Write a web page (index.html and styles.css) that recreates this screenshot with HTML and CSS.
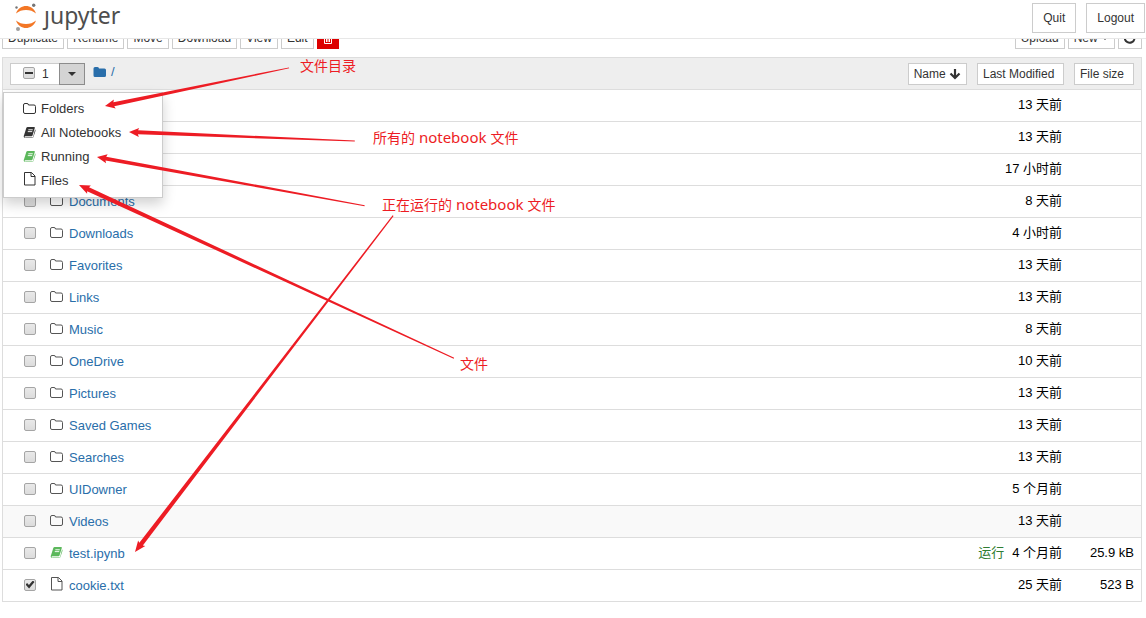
FILE: index.html
```
<!DOCTYPE html>
<html lang="zh-CN">
<head>
<meta charset="utf-8">
<title>Jupyter</title>
<link rel="stylesheet" href="styles.css">
</head>
<body>
<svg class="defs" aria-hidden="true">
  <symbol id="folder-o" viewBox="0 0 14 12"><path d="M.5 9V2Q.5.500 2 .500h2Q5.500.500 5.500 2H11Q12.500 2 12.500 3.500V9Q12.500 10.500 11 10.500H2Q.5 10.500.5 9z" fill="none" stroke="currentColor"/></symbol>
  <symbol id="folder" viewBox="0 0 14 12"><path d="M.5 9.500v-7Q.5 1 2 1h2.500Q6 1 6 2.500h5.500Q13 2.500 13 4v5.500Q13 11 11.500 11H2Q.5 11 .5 9.500z" fill="currentColor"/></symbol>
  <symbol id="book" viewBox="0 0 14 13"><path d="M4.500 0h7q1 0 .7 1L9.800 9q-.3 1-1.200 1H2q-.9 0-.9.8t1 .7h7q1 0 1.300-1l2.100-7.700q.7.500.4 1.400l-2.200 6.700Q10.500 12 9 12H2Q.3 12 .2 10.500q0-.8.4-1.700L3 1q.3-1 1.500-1z" fill="currentColor"/><path d="M5.200 3h4.800M4.600 5h4.800" stroke="#fff"/></symbol>
  <symbol id="file-o" viewBox="0 0 12 14"><path d="M.5.5h7l3.500 3.500v9H.5zM7 .5v4h4" fill="none" stroke="currentColor"/></symbol>
</svg>

<header class="topbar">
  <a class="brand" href="#" aria-label="jupyter">
    <svg class="brand-mark" viewBox="0 0 24 28" aria-hidden="true">
      <path d="M2 10.500C4 5 8 3 12 3s8 2 10 7.500C19 8 16 7 12 7s-7 1-10 3.500z" fill="#f37726"/>
      <path d="M2 17.500C4 23 8 25 12 25s8-2 10-7.500C19 20 16 21 12 21s-7-1-10-3.500z" fill="#f37726"/>
      <circle cx="19.700" cy="2.200" r="1.700" fill="#767677"/><circle cx="2.500" cy="4.500" r="1.200" fill="#767677"/><circle cx="4" cy="26" r="2" fill="#9e9e9e"/>
    </svg>
    <span class="brand-name">ȷupyter</span>
  </a>
  <div class="session">
    <button class="btn btn-lg">Quit</button>
    <button class="btn btn-lg">Logout</button>
  </div>
</header>

<main class="page">
  <div class="toolbar">
    <div class="tools">
      <button class="btn">Duplicate</button>
      <button class="btn">Rename</button>
      <button class="btn">Move</button>
      <button class="btn">Download</button>
      <button class="btn">View</button>
      <button class="btn">Edit</button>
      <button class="btn btn-danger" aria-label="Delete"><svg class="trash" viewBox="0 0 10 12"><path d="M0 2.500h10M3 2V.5h4V2M1.500 3v8.500h7V3M3.500 5v5M5 5v5M6.500 5v5" fill="none" stroke="#fff"/></svg></button>
    </div>
    <div class="tools">
      <button class="btn">Upload</button>
      <button class="btn">New <span class="caret"></span></button>
      <button class="btn" aria-label="Refresh"><svg class="refresh" viewBox="0 0 12 12"><path d="M9.500 2.500A5 5 0 1 0 10.500 7M11 0v4.500H6.500" fill="none" stroke="currentColor" stroke-width="2"/></svg></button>
    </div>
  </div>

  <section class="panel">
    <div class="panel-head">
      <div class="select-group">
        <label class="select-all"><input type="checkbox" class="tick tick-mixed"><span>1</span></label>
        <button class="select-toggle" aria-label="Select"><span class="caret"></span></button>
        <ul class="menu">
          <li><a href="#"><svg class="icon"><use href="#folder-o"/></svg>Folders</a></li>
          <li><a href="#"><svg class="icon"><use href="#book"/></svg>All Notebooks</a></li>
          <li><a href="#"><svg class="icon running"><use href="#book"/></svg>Running</a></li>
          <li><a href="#"><svg class="icon icon-file"><use href="#file-o"/></svg>Files</a></li>
        </ul>
      </div>
      <a class="crumb" href="#"><svg class="icon"><use href="#folder"/></svg>/</a>
      <div class="sorts">
        <button class="btn sort-name">Name <svg class="arrow" viewBox="0 0 12 12"><path d="M6 1v9M1.500 5.500L6 10l4.500-4.500" fill="none" stroke="currentColor" stroke-width="2.200"/></svg></button>
        <button class="btn sort-modified">Last Modified</button>
        <button class="btn sort-size">File size</button>
      </div>
    </div>
    <table class="files">
      <tbody>
        <tr><td class="pick"></td><td></td><td class="when">13 天前</td><td class="size"></td></tr>
        <tr><td class="pick"></td><td></td><td class="when">13 天前</td><td class="size"></td></tr>
        <tr><td class="pick"></td><td></td><td class="when">17 小时前</td><td class="size"></td></tr>
        <tr><td class="pick"><input type="checkbox" class="tick" aria-label="Documents"></td><td><a class="name" href="#"><svg class="icon"><use href="#folder-o"/></svg>Documents</a></td><td class="when">8 天前</td><td class="size"></td></tr>
        <tr><td class="pick"><input type="checkbox" class="tick" aria-label="Downloads"></td><td><a class="name" href="#"><svg class="icon"><use href="#folder-o"/></svg>Downloads</a></td><td class="when">4 小时前</td><td class="size"></td></tr>
        <tr><td class="pick"><input type="checkbox" class="tick" aria-label="Favorites"></td><td><a class="name" href="#"><svg class="icon"><use href="#folder-o"/></svg>Favorites</a></td><td class="when">13 天前</td><td class="size"></td></tr>
        <tr><td class="pick"><input type="checkbox" class="tick" aria-label="Links"></td><td><a class="name" href="#"><svg class="icon"><use href="#folder-o"/></svg>Links</a></td><td class="when">13 天前</td><td class="size"></td></tr>
        <tr><td class="pick"><input type="checkbox" class="tick" aria-label="Music"></td><td><a class="name" href="#"><svg class="icon"><use href="#folder-o"/></svg>Music</a></td><td class="when">8 天前</td><td class="size"></td></tr>
        <tr><td class="pick"><input type="checkbox" class="tick" aria-label="OneDrive"></td><td><a class="name" href="#"><svg class="icon"><use href="#folder-o"/></svg>OneDrive</a></td><td class="when">10 天前</td><td class="size"></td></tr>
        <tr><td class="pick"><input type="checkbox" class="tick" aria-label="Pictures"></td><td><a class="name" href="#"><svg class="icon"><use href="#folder-o"/></svg>Pictures</a></td><td class="when">13 天前</td><td class="size"></td></tr>
        <tr><td class="pick"><input type="checkbox" class="tick" aria-label="Saved Games"></td><td><a class="name" href="#"><svg class="icon"><use href="#folder-o"/></svg>Saved Games</a></td><td class="when">13 天前</td><td class="size"></td></tr>
        <tr><td class="pick"><input type="checkbox" class="tick" aria-label="Searches"></td><td><a class="name" href="#"><svg class="icon"><use href="#folder-o"/></svg>Searches</a></td><td class="when">13 天前</td><td class="size"></td></tr>
        <tr><td class="pick"><input type="checkbox" class="tick" aria-label="UIDowner"></td><td><a class="name" href="#"><svg class="icon"><use href="#folder-o"/></svg>UIDowner</a></td><td class="when">5 个月前</td><td class="size"></td></tr>
        <tr class="hovered"><td class="pick"><input type="checkbox" class="tick" aria-label="Videos"></td><td><a class="name" href="#"><svg class="icon"><use href="#folder-o"/></svg>Videos</a></td><td class="when">13 天前</td><td class="size"></td></tr>
        <tr><td class="pick"><input type="checkbox" class="tick" aria-label="test.ipynb"></td><td><a class="name" href="#"><svg class="icon running"><use href="#book"/></svg>test.ipynb</a></td><td class="when"><span class="status">运行</span>4 个月前</td><td class="size">25.9 kB</td></tr>
        <tr><td class="pick"><input type="checkbox" class="tick" aria-label="cookie.txt" checked></td><td><a class="name" href="#"><svg class="icon icon-file"><use href="#file-o"/></svg>cookie.txt</a></td><td class="when">25 天前</td><td class="size">523 B</td></tr>
      </tbody>
    </table>
  </section>
</main>

<svg class="notes" width="1146" height="618" viewBox="0 0 1146 618">
  <path transform="translate(105 106) rotate(-11.700)" d="M0 0L10-4.500 9-2 188-.5V.5L9 2l1 2.500z"/>
  <path transform="translate(129 132) rotate(2.300)" d="M0 0L10-4.500 9-2 226-.5V.5L9 2l1 2.500z"/>
  <path transform="translate(97 157) rotate(10.300)" d="M0 0L10-4.500 9-2 272-.5V.5L9 2l1 2.500z"/>
  <path transform="translate(79 185) rotate(24.800)" d="M0 0L11-4.500 10-2.200 413-.6V.6L10 2.200l1 2.300z"/>
  <path transform="translate(135 552) rotate(-52.500)" d="M0 0L11-4.500 10-2.200 424-.6V.6L10 2.200l1 2.300z"/>
  <text x="300" y="71">文件目录</text>
  <text x="373" y="143">所有的<tspan class="latin"> notebook </tspan>文件</text>
  <text x="382" y="210">正在运行的<tspan class="latin"> notebook </tspan>文件</text>
  <text x="460" y="369">文件</text>
</svg>
</body>
</html>
```
FILE: styles.css
```
* { box-sizing: border-box; }
body {
  margin: 0;
  background: #fff;
  color: #000;
  font: 13px/20px "Liberation Sans", "Noto Sans CJK SC", sans-serif;
}
a { color: #296eaa; text-decoration: none; }
.defs { display: none; }

.topbar {
  display: flex;
  justify-content: space-between;
  align-items: flex-start;
  height: 39px;
  padding: 3px 1px 0 14px;
  border-bottom: 1px solid #e7e7e7;
}
.brand { display: flex; align-items: flex-start; gap: 6px; color: #4e4e4e; }
.brand-mark { width: 24px; height: 28px; }
.brand-name { font: 23px/24px "Noto Sans", "Open Sans", sans-serif; }
.session { display: flex; gap: 10px; }

.btn {
  display: inline-flex;
  align-items: center;
  height: 22px;
  padding: 0 5px;
  border: 1px solid #ccc;
  background: #fff;
  color: #333;
  font: 12px/18px "Liberation Sans", sans-serif;
  white-space: pre;
}
.btn-lg { height: 30px; padding: 0 10px; }
.btn-danger { border-color: #d00; background: #d00; }
.trash { width: 10px; height: 12px; }
.refresh { width: 12px; height: 12px; }
.caret {
  border: 4px solid transparent;
  border-top-color: currentColor;
  border-bottom: 0;
}

.page { padding: 0 4px 0 2px; }
.toolbar {
  display: flex;
  justify-content: space-between;
  align-items: flex-end;
  height: 10px;
  margin-bottom: 8px;
  overflow: hidden;
}
.tools { display: flex; gap: 3px; }
.tools .btn { min-width: 22px; }

.panel { border: 1px solid #ddd; border-bottom: 0; }
.panel-head {
  display: flex;
  align-items: center;
  height: 32px;
  padding: 0 7px;
  border-bottom: 1px solid #ddd;
  background: #eee;
}
.select-group { position: relative; display: flex; }
.select-all {
  display: flex;
  align-items: center;
  gap: 7px;
  width: 49px;
  height: 22px;
  padding-left: 12px;
  border: 1px solid #ccc;
  border-right: 0;
  background: #fff;
  color: #333;
  font-size: 12px;
}
.select-toggle {
  display: flex;
  align-items: center;
  justify-content: center;
  width: 26px;
  height: 22px;
  padding: 0;
  border: 1px solid #8c8c8c;
  background: #d4d4d4;
  color: #333;
}
.menu {
  position: absolute;
  top: 29px;
  left: -7px;
  z-index: 1;
  width: 160px;
  margin: 0;
  padding: 4px 0;
  border: 1px solid #ccc;
  background: #fff;
  box-shadow: 0 6px 12px rgba(0, 0, 0, .18);
  list-style: none;
}
.menu a {
  display: flex;
  align-items: center;
  gap: 4px;
  height: 24px;
  padding-left: 19px;
  color: #333;
}
.icon { width: 14px; height: 12px; flex: none; color: #555; }
.icon-file { height: 14px; margin-bottom: 4px; }
.menu .icon { color: #333; }
.icon.running, .menu .running { color: #5cb85c; }
.crumb { display: flex; align-items: center; gap: 4px; margin: 0 auto 4px 8px; }
.crumb .icon { color: #296eaa; }
.sorts { display: flex; gap: 10px; }
.arrow { width: 12px; height: 12px; }
.sort-modified { width: 87px; }
.sort-size { width: 60px; }

.files { width: 100%; border-collapse: separate; border-spacing: 0; }
.files td { height: 32px; padding: 0; border-bottom: 1px solid #ddd; }
.hovered td { background: #f9f9f9; }
.files .pick { width: 47px; padding: 0 0 2px 21px; }
.name { display: flex; align-items: center; gap: 5px; }
.files .icon { margin-bottom: 2px; }
.files .icon-file { margin-bottom: 4px; }
.files .when { text-align: right; padding-bottom: 2px; }
.files .size { width: 79px; padding-right: 7px; padding-bottom: 2px; text-align: right; }
.status { margin-right: 8px; color: #2f7d32; }

.tick {
  display: grid;
  place-content: center;
  appearance: none;
  width: 12px;
  height: 12px;
  margin: 0;
  border: 1px solid #a5a5a5;
  border-radius: 2px;
  background: linear-gradient(#e9e9e9, #dcdcdc);
}
.tick-mixed { margin-bottom: 2px; }
.tick-mixed::before { content: ""; width: 8px; height: 2px; background: #333; }
.tick:checked::before {
  content: "";
  width: 9px;
  height: 8px;
  background: #333;
  clip-path: polygon(0 50%, 18% 32%, 38% 55%, 82% 0, 100% 18%, 40% 100%);
}

.notes { position: absolute; top: 0; left: 0; z-index: 2; fill: #ed1c24; pointer-events: none; }
.notes text { font: 14px "Noto Sans CJK SC", sans-serif; }
.notes .latin { font: 15px "Noto Sans", "Open Sans", sans-serif; }
```
